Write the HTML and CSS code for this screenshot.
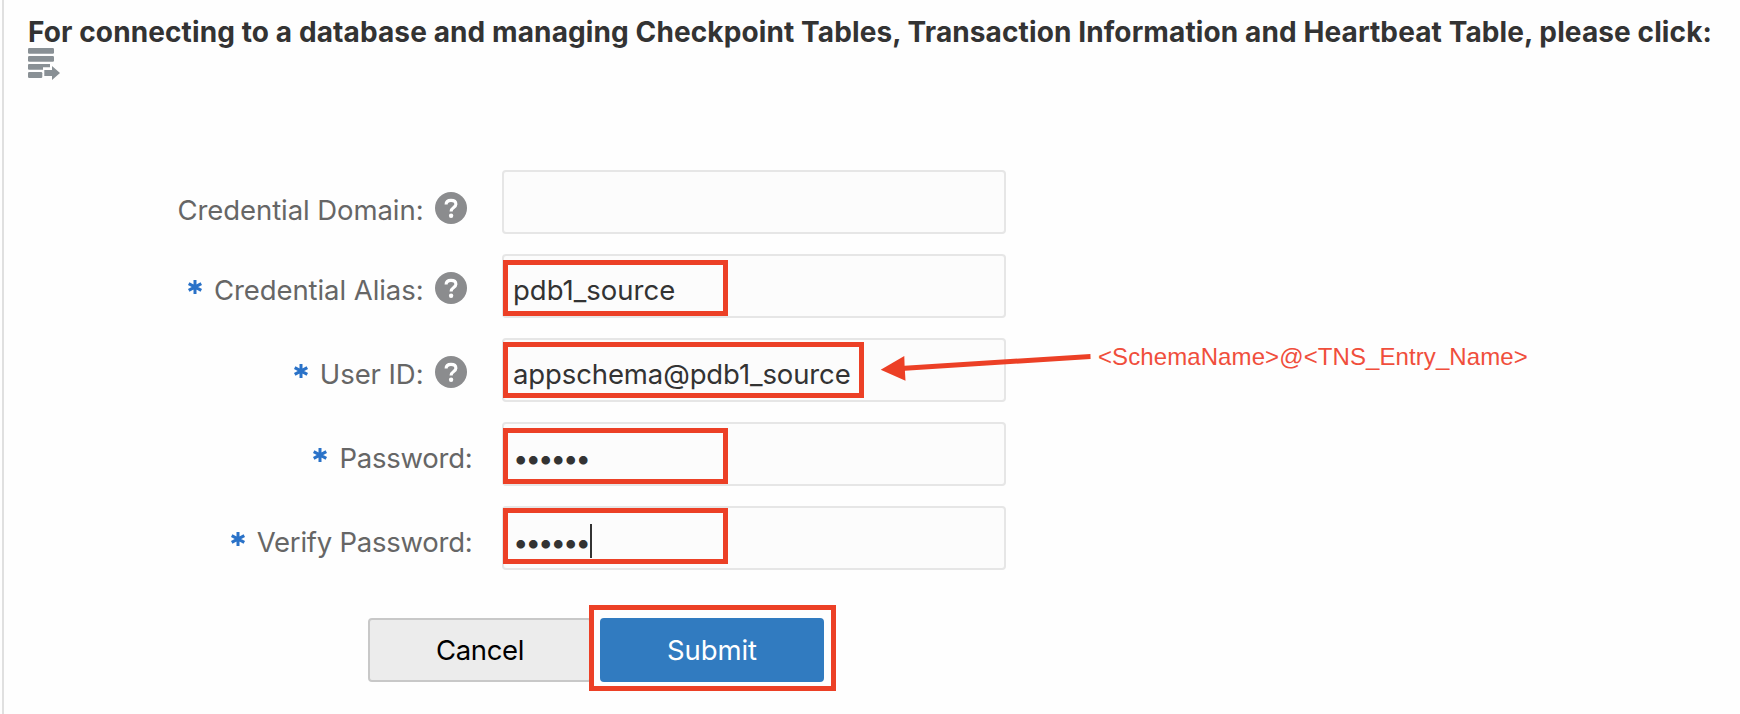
FILE: index.html
```html
<!DOCTYPE html>
<html lang="en">
<head>
<meta charset="utf-8">
<title>Credential</title>
<link rel="stylesheet" href="styles.css">
</head>
<body>
<svg class="defs" width="0" height="0">
  <symbol id="help" viewBox="0 0 32 32">
    <circle cx="16" cy="16" r="16" fill="#8b8c8e"/>
    <path d="M11.1 12.6C11.1 9.9 13 8.4 16 8.4C19 8.4 20.9 10 20.9 12.3C20.9 15.6 16.1 15.4 16.1 19.4" fill="none" stroke="#fff" stroke-width="3.1"/>
    <circle cx="16.1" cy="23.7" r="2.2" fill="#fff"/>
  </symbol>
</svg>
<main class="panel">
  <header class="intro">
    <h1 class="intro-text">For connecting to a database and managing Checkpoint Tables, Transaction Information and Heartbeat Table, please click:</h1>
    <svg class="connect-icon" viewBox="0 0 32 32" fill="#899095">
      <rect width="26" height="5.7" rx="1.2"/>
      <rect y="8" width="26" height="5.8" rx="1.2"/>
      <path d="M1 16H22V19.2H15V21.8H1Q0 21.8 0 20.8V17Q0 16 1 16Z"/>
      <rect y="24" width="14.3" height="6" rx="1.2"/>
      <path d="M16.3 22H24V18L32 25L24 32V28H16.3Z"/>
    </svg>
  </header>
  <form class="form">
    <div class="row">
      <div class="label label-first"><span>Credential Domain:</span><svg class="help"><use href="#help"/></svg></div>
      <div class="field"></div>
    </div>
    <div class="row">
      <div class="label"><svg class="star" viewBox="0 0 14 14"><path d="M7 0V14M.7 3.6L13.3 10.4M13.3 3.6L.7 10.4"/></svg><span>Credential Alias:</span><svg class="help"><use href="#help"/></svg></div>
      <div class="field"><span>pdb1_source</span><i class="mark mark-alias"></i></div>
    </div>
    <div class="row">
      <div class="label"><svg class="star" viewBox="0 0 14 14"><path d="M7 0V14M.7 3.6L13.3 10.4M13.3 3.6L.7 10.4"/></svg><span>User ID:</span><svg class="help"><use href="#help"/></svg></div>
      <div class="field"><span class="user-value">appschema@pdb1_source</span><i class="mark mark-user"></i></div>
    </div>
    <div class="row">
      <div class="label label-plain"><svg class="star" viewBox="0 0 14 14"><path d="M7 0V14M.7 3.6L13.3 10.4M13.3 3.6L.7 10.4"/></svg><span>Password:</span></div>
      <div class="field"><span class="dots">••••••</span><i class="mark mark-pass"></i></div>
    </div>
    <div class="row">
      <div class="label label-plain"><svg class="star" viewBox="0 0 14 14"><path d="M7 0V14M.7 3.6L13.3 10.4M13.3 3.6L.7 10.4"/></svg><span>Verify Password:</span></div>
      <div class="field"><span class="dots">••••••</span><i class="caret"></i><i class="mark mark-verify"></i></div>
    </div>
    <div class="actions">
      <button type="button" class="btn btn-cancel">Cancel</button>
      <div class="submit-wrap"><button type="button" class="btn btn-primary">Submit</button><i class="mark mark-submit"></i></div>
    </div>
  </form>
  <svg class="arrow" viewBox="0 0 220 40" fill="#ec4026"><path d="M.7 19.7L24.3 6L24.6 15.7L210.4 4L210.6 9L24.9 20.7L25.5 30.8Z"/></svg>
  <span class="note">&lt;SchemaName&gt;@&lt;TNS_Entry_Name&gt;</span>
</main>
</body>
</html>
```
FILE: styles.css
```css
* { box-sizing: border-box; }
body { margin: 0; background: #fefefe; color: #333; font-family: Inter, "Liberation Sans", sans-serif; font-size: 27.5px; line-height: 36px; overflow: hidden; }
.defs { position: absolute; }
.panel { position: relative; height: 714px; margin-left: 2px; border-left: 2px solid #e0e0e0; white-space: nowrap; }
.intro { height: 170px; padding: 14px 0 0 24px; }
.intro-text { margin: 0; height: 34px; font-size: 28px; line-height: 36px; font-weight: 700; letter-spacing: 0.11px; }
.connect-icon { display: block; width: 32px; height: 32px; }
.form { display: flex; flex-direction: column; gap: 20px; }
.row { display: grid; grid-template-columns: 463px 504px; column-gap: 35px; height: 64px; }
.label { display: flex; justify-content: flex-end; padding-top: 18px; color: #666; letter-spacing: -0.07px; }
.label-first { padding-top: 22px; }
.label-plain { margin-right: -5.5px; letter-spacing: -0.24px; }
.help { width: 32px; height: 32px; margin-left: 11.5px; }
.star { width: 14px; height: 14px; margin: 8px 12px 0 0; overflow: visible; fill: none; stroke: #2a72c8; stroke-width: 3; }
.field { position: relative; display: flex; padding: 16px 0 0 9px; border: 2px solid #e6e6e6; border-radius: 4px; background: #fcfcfc; }
.user-value { letter-spacing: -0.11px; }
.mark { position: absolute; border: 5px solid #ec4026; left: -1px; height: 56px; width: 225px; }
.mark-alias { top: 4px; }
.mark-user { top: 2px; width: 361px; }
.mark-pass { top: 4px; }
.mark-verify { top: 0; }
.dots { letter-spacing: -2.95px; }
.caret { position: absolute; left: 86px; top: 16px; width: 2px; height: 34px; background: #333; }
.actions { display: flex; gap: 8px; padding: 28px 0 0 364px; }
.btn { display: block; width: 224px; height: 64px; padding: 0; border: 2px solid #c8c8c8; border-radius: 4px; background: #ececec; color: #000; font: inherit; }
.btn-cancel { letter-spacing: -0.35px; }
.btn-primary { border-color: #317bc0; background: #317bc0; color: #fff; letter-spacing: -0.1px; }
.submit-wrap { position: relative; }
.mark-submit { left: -11.5px; top: -13px; width: 247px; height: 86px; }
.arrow { position: absolute; left: 876px; top: 350px; width: 220px; height: 40px; }
.note { position: absolute; left: 1094px; top: 343px; font: 24px/28px "Liberation Sans", Arial, sans-serif; letter-spacing: 0.09px; color: #f04e3c; }
```
